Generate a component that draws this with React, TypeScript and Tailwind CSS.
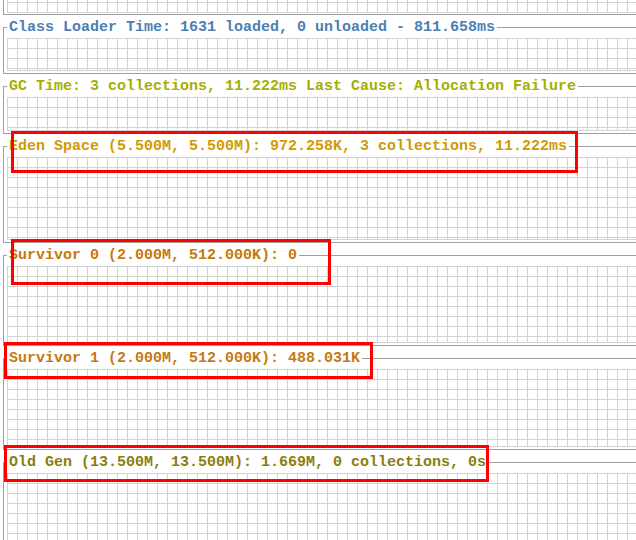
import React from 'react'

// grid background of a chart panel, 10px squares
function Grid({ id, h, offset = 0 }: { id: string; h: number; offset?: number }) {
  return (
    <svg className="block w-full" height={h}>
      <defs>
        <pattern id={id} width="10" height="10" patternUnits="userSpaceOnUse" y={offset}>
          <path d="M0 0.5H10M0.5 0V10" stroke="#d2d2d2" fill="none" />
        </pattern>
      </defs>
      <rect width="100%" height="100%" fill={`url(#${id})`} />
      <line x1="0" x2="100%" y1={h - 0.5} y2={h - 0.5} stroke="#d2d2d2" />
    </svg>
  )
}

interface PanelProps {
  id: string
  title: string
  color: string
  gridH: number
}

function Panel({ id, title, color, gridH }: PanelProps) {
  return (
    <div>
      {/* title on the top border */}
      <div className="flex h-[23px]">
        <div className="w-[4px] flex flex-col flex-shrink-0">
          <div className="h-[12px]" />
          <div className="flex-1 border-l border-t border-[#a0a0a0]" />
        </div>
        <span className={`px-[2px] pt-[2px] leading-[21px] whitespace-pre font-bold ${color}`}>{title}</span>
        <div className="flex-1 flex flex-col">
          <div className="h-[12px]" />
          <div className="border-t border-[#a0a0a0]" />
        </div>
      </div>
      <div className="border-l border-b border-[#a0a0a0] pl-[3px] pb-[2px]">
        <Grid id={id} h={gridH} />
      </div>
    </div>
  )
}

const panels: PanelProps[] = [
  {
    id: 'g-cl',
    title: 'Class Loader Time: 1631 loaded, 0 unloaded - 811.658ms',
    color: 'text-[#4d80b2]',
    gridH: 33,
  },
  {
    id: 'g-gc',
    title: 'GC Time: 3 collections, 11.222ms Last Cause: Allocation Failure',
    color: 'text-[#a6ae00]',
    gridH: 34,
  },
  {
    id: 'g-eden',
    title: 'Eden Space (5.500M, 5.500M): 972.258K, 3 collections, 11.222ms',
    color: 'text-[#d09a00]',
    gridH: 83,
  },
  {
    id: 'g-s0',
    title: 'Survivor 0 (2.000M, 512.000K): 0',
    color: 'text-[#c8780a]',
    gridH: 77,
  },
  {
    id: 'g-s1',
    title: 'Survivor 1 (2.000M, 512.000K): 488.031K',
    color: 'text-[#c47a12]',
    gridH: 78,
  },
  {
    id: 'g-old',
    title: 'Old Gen (13.500M, 13.500M): 1.669M, 0 collections, 0s',
    color: 'text-[#8b7d0b]',
    gridH: 100,
  },
]

export default function App() {
  return (
    <div className="relative h-[540px] w-[636px] overflow-hidden bg-white pl-[3px] font-['Liberation_Mono',monospace] text-[15px]">
      {/* tail of the panel above */}
      <div className="border-l border-b border-[#a0a0a0] pl-[3px] pb-[1px]">
        <Grid id="g-top" h={13} offset={2} />
      </div>

      {panels.map(p => (
        <Panel key={p.id} {...p} />
      ))}

      {/* red annotation boxes */}
      <div className="absolute left-[11px] top-[131px] w-[567px] h-[42px] border-[3px] border-[#ff0000]" />
      <div className="absolute left-[11px] top-[239px] w-[320px] h-[46px] border-[3px] border-[#ff0000]" />
      <div className="absolute left-[4px] top-[342px] w-[369px] h-[37px] border-[3px] border-[#ff0000]" />
      <div className="absolute left-[4px] top-[445px] w-[485px] h-[37px] border-[3px] border-[#ff0000]" />
    </div>
  )
}
